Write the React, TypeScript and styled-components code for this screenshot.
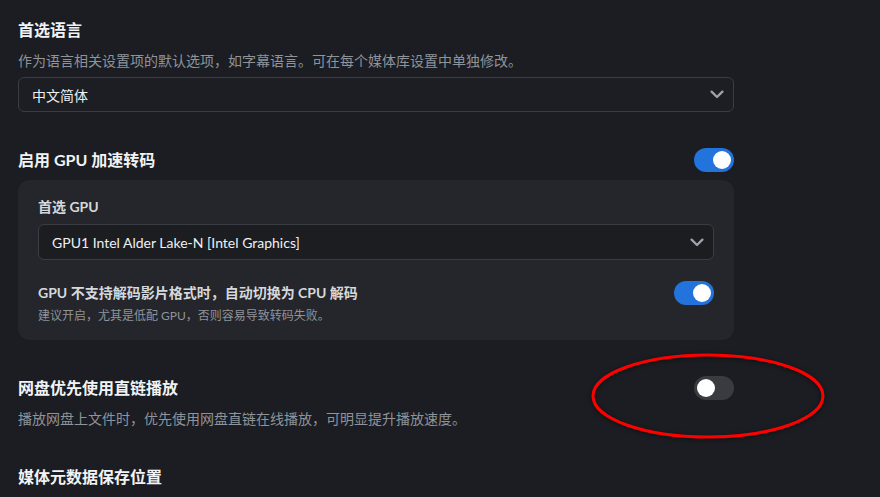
import React from "react";
import styled, { createGlobalStyle } from "styled-components";

const Global = createGlobalStyle`
  html, body { margin: 0; padding: 0; background: #1b1d22; }
  body {
    font-family: "Lato", "Noto Sans CJK SC", sans-serif;
    color: #eceef1;
    -webkit-font-smoothing: antialiased;
  }
`;

const Page = styled.div`
  position: relative;
  width: 880px;
  height: 497px;
  overflow: hidden;
  box-sizing: border-box;
  padding: 18px 0 0 18px;
  background: #1b1d22;
`;

const Column = styled.div`
  width: 716px;
  display: flex;
  flex-direction: column;
  gap: 36px;
`;

const Section = styled.section`
  display: flex;
  flex-direction: column;
`;

const HeaderRow = styled.div`
  display: flex;
  align-items: center;
  justify-content: space-between;
  height: 24px;
`;

const Title = styled.h2`
  margin: 0;
  font-size: 16px;
  line-height: 24px;
  font-weight: 700;
  color: #f2f3f5;
`;

const Desc = styled.p<{ $small?: boolean }>`
  margin: ${(p) => (p.$small ? "2px 0 0" : "9px 0 0")};
  font-size: ${(p) => (p.$small ? "12px" : "14px")};
  line-height: ${(p) => (p.$small ? "18px" : "20px")};
  color: #8f939a;
`;

const Select = styled.div<{ $inset?: boolean }>`
  margin-top: ${(p) => (p.$inset ? "7px" : "6px")};
  height: ${(p) => (p.$inset ? "36px" : "35px")};
  box-sizing: border-box;
  border: 1px solid #3a3d43;
  border-radius: 6px;
  background: ${(p) => (p.$inset ? "#1b1d21" : "#1c1e23")};
  display: flex;
  align-items: center;
  justify-content: space-between;
  padding: 0 9px 0 13px;
  font-size: 14px;
  color: #eef0f2;
`;

const Toggle = styled.div<{ $on?: boolean }>`
  width: 40px;
  height: 24px;
  border-radius: 12px;
  background: ${(p) => (p.$on ? "#2273dc" : "#393b41")};
  position: relative;
  flex-shrink: 0;
  &::after {
    content: "";
    position: absolute;
    top: 3px;
    left: ${(p) => (p.$on ? "19px" : "3px")};
    width: 18px;
    height: 18px;
    border-radius: 50%;
    background: #ffffff;
  }
`;

const Panel = styled.div`
  margin-top: 8px;
  background: #24262b;
  border-radius: 12px;
  padding: 17px 20px 15px 20px;
  display: flex;
  flex-direction: column;
`;

const Label = styled.div`
  font-size: 14px;
  line-height: 20px;
  font-weight: 700;
  color: #d5d8dc;
`;

const SubRow = styled.div`
  margin-top: 21px;
  display: flex;
  flex-direction: column;
`;

const Chevron = () => (
  <svg width="14" height="9" viewBox="0 0 14 9" fill="none" stroke="#9fa3aa" strokeWidth="2.3" strokeLinecap="round" strokeLinejoin="round">
    <path d="M1.6 1.6 L7 7 L12.4 1.6" />
  </svg>
);

const Annotation = styled.svg`
  position: absolute;
  left: 590px;
  top: 352px;
  overflow: visible;
  filter: drop-shadow(0 1px 2px rgba(0, 0, 0, 0.5));
`;

export default function App() {
  return (
    <>
      <Global />
      <Page>
        <Column>
          <Section>
            <HeaderRow>
              <Title>首选语言</Title>
            </HeaderRow>
            <Desc>作为语言相关设置项的默认选项，如字幕语言。可在每个媒体库设置中单独修改。</Desc>
            <Select>
              <span>中文简体</span>
              <Chevron />
            </Select>
          </Section>

          <Section>
            <HeaderRow>
              <Title>启用 GPU 加速转码</Title>
              <Toggle $on />
            </HeaderRow>
            <Panel>
              <Label>首选 GPU</Label>
              <Select $inset>
                <span>GPU1 Intel Alder Lake-N [Intel Graphics]</span>
                <Chevron />
              </Select>
              <SubRow>
                <HeaderRow>
                  <Label>GPU 不支持解码影片格式时，自动切换为 CPU 解码</Label>
                  <Toggle $on />
                </HeaderRow>
                <Desc $small>建议开启，尤其是低配 GPU，否则容易导致转码失败。</Desc>
              </SubRow>
            </Panel>
          </Section>

          <Section>
            <HeaderRow>
              <Title>网盘优先使用直链播放</Title>
              <Toggle />
            </HeaderRow>
            <Desc>播放网盘上文件时，优先使用网盘直链在线播放，可明显提升播放速度。</Desc>
          </Section>

          <Section>
            <HeaderRow>
              <Title>媒体元数据保存位置</Title>
            </HeaderRow>
          </Section>
        </Column>
        <Annotation width="236" height="88" viewBox="0 0 236 88">
          <ellipse cx="118" cy="44" rx="115" ry="41" fill="none" stroke="#ff0000" strokeWidth="3" />
        </Annotation>
      </Page>
    </>
  );
}
